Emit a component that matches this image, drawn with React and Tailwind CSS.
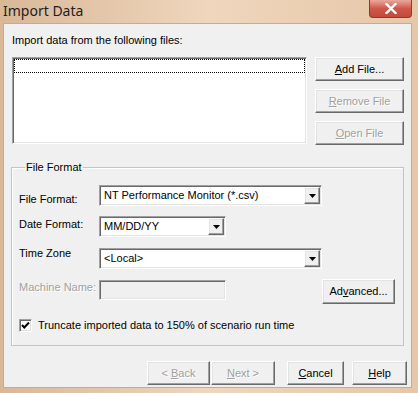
import React from "react"

const raised = "bg-[#f0f0f0] border border-t-white border-l-white border-r-[#696969] border-b-[#696969] shadow-[inset_-1px_-1px_0_#a0a0a0,inset_1px_1px_0_#e3e3e3]"
const sunken = "border border-t-[#a0a0a0] border-l-[#a0a0a0] border-r-white border-b-white shadow-[inset_1px_1px_0_#696969,inset_-1px_-1px_0_#e3e3e3]"
const dim = "text-[#a0a0a0] [text-shadow:1px_1px_0_#fff]"

const Btn = ({ children, w, off }) => (
  <div className={`${raised} ${w} h-[24px] flex justify-center items-center ${off ? dim : "text-black"}`}>{children}</div>
)

const Combo = ({ value, w }) => (
  <div className={`${sunken} ${w} h-[21px] bg-white flex items-center justify-between pl-[4px] pr-[1px]`}>
    <span>{value}</span>
    <div className={`${raised} w-[16px] h-[17px] flex justify-center items-center`}>
      <svg width="7" height="4" viewBox="0 0 7 4"><path d="M0 0h7L3.5 4z" fill="#000" /></svg>
    </div>
  </div>
)

const App = () => {
  return (
    <div className="w-[418px] h-[393px] flex flex-col bg-gradient-to-r from-[#d9b898] via-[#efd6bd] to-[#e6c7a8] text-[11px] leading-[13px] text-black" style={{ fontFamily: '"Liberation Sans", Arial, sans-serif' }}>
      <div className="h-[23px] flex justify-between items-start shrink-0">
        <div className="pl-[3px] pt-[3px] text-[14px] leading-[16px] text-[#1e1e1e]" style={{ fontFamily: '"Noto Sans", "Liberation Sans", sans-serif' }}>Import Data</div>
        <div className="mr-[6px] w-[43px] h-[18px] rounded-b-[4px] border border-t-0 border-[#8a3a30] bg-gradient-to-b from-[#e9a89c] via-[#d0574a] to-[#c24a3c] flex justify-center items-center">
          <svg width="12" height="11" viewBox="0 0 12 11"><path d="M1.5 1l9 9M10.5 1l-9 9" stroke="#fff" strokeWidth="2.4" strokeLinecap="square" /></svg>
        </div>
      </div>

      <div className="flex-1 ml-[3px] mr-[6px] mb-[5px] bg-[#f0f0f0] border border-[#c7ab8f] flex flex-col">
        <div className="ml-[8px] mt-[10px]">Import data from the following files:</div>

        <div className="flex ml-[8px] mt-[10px]">
          <div className={`${sunken} w-[295px] h-[87px] bg-white p-[1px]`}>
            <div className="h-[14px] border border-dotted border-black" />
          </div>
          <div className="ml-[8px] flex flex-col gap-[8px]">
            <Btn w="w-[89px]"><span><u>A</u>dd File...</span></Btn>
            <Btn w="w-[89px]" off><span><u>R</u>emove File</span></Btn>
            <Btn w="w-[89px]" off><span><u>O</u>pen File</span></Btn>
          </div>
        </div>

        <fieldset className="ml-[7px] mt-[16px] w-[393px] h-[185px] border border-[#c4c4c4] shadow-[inset_1px_1px_0_#fff] pl-[7px] pt-[11px]">
          <legend className="ml-[6px] px-[1px]">File Format</legend>
          <div className="flex h-[21px]">
            <div className="w-[80px] mt-[8px]">File Format:</div>
            <Combo w="w-[223px]" value="NT Performance Monitor (*.csv)" />
          </div>
          <div className="flex h-[21px] mt-[10px]">
            <div className="w-[80px] mt-[2px]">Date Format:</div>
            <Combo w="w-[127px]" value="MM/DD/YY" />
          </div>
          <div className="flex h-[21px] mt-[11px]">
            <div className="w-[80px] mt-[-1px]">Time Zone</div>
            <Combo w="w-[223px]" value="<Local>" />
          </div>
          <div className="flex items-start mt-[11px]">
            <div className={`w-[80px] mt-[1px] ${dim}`}>Machine Name:</div>
            <div className={`${sunken} w-[127px] h-[20px] bg-[#f0f0f0]`} />
            <div className={`${raised} ml-[96px] mt-[-1px] w-[73px] h-[25px] flex justify-center items-center`}><span>Ad<u>v</u>anced...</span></div>
          </div>
          <div className="flex items-center mt-[15px]">
            <div className={`${sunken} w-[13px] h-[13px] bg-white flex justify-center items-center`}>
              <svg width="9" height="9" viewBox="0 0 9 9"><path d="M1 4l2.3 2.5L8 1.5" stroke="#000" strokeWidth="2" fill="none" /></svg>
            </div>
            <div className="ml-[6px]">Truncate imported data to 150% of scenario run time</div>
          </div>
        </fieldset>

        <div className="flex justify-end mt-[15px] mr-[4px]">
          <Btn w="w-[63px]" off><span>&lt; <u>B</u>ack</span></Btn>
          <div className="w-[1px]" />
          <Btn w="w-[64px]" off><span><u>N</u>ext &gt;</span></Btn>
          <div className="w-[12px]" />
          <Btn w="w-[57px]"><span><u>C</u>ancel</span></Btn>
          <div className="w-[8px]" />
          <Btn w="w-[55px]"><span><u>H</u>elp</span></Btn>
        </div>
      </div>
    </div>
  )
}

export default App
